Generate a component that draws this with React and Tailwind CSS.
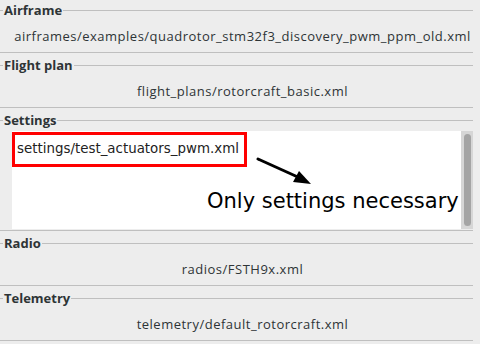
import React from 'react';

const FONT = { fontFamily: '"Open Sans", "DejaVu Sans", sans-serif' };

const FrameLabel = ({ title }) => (
  <div className="flex items-center h-[21px]">
    <div className="w-[3px] h-px bg-[#bfbfbf]" />
    <span className="px-[1px] text-[13px] font-bold text-[#2e3436] leading-none">{title}</span>
    <div className="w-[410px] flex-1 h-px bg-[#bfbfbf] mr-[7px]" />
  </div>
);

const FileFrame = ({ title, file }) => (
  <div className="mb-[2px]">
    <FrameLabel title={title} />
    <div className="h-[32px] flex items-center justify-center pl-[12px] text-[13px] tracking-[0.5px] text-[#2e3436] border-b border-[#bfbfbf] mr-[7px] whitespace-nowrap overflow-hidden">
      {file}
    </div>
  </div>
);

const Arrow = () => (
  <svg width="60" height="34" viewBox="0 0 60 34" className="absolute left-[243px] top-[25px]">
    <line x1="3" y1="3" x2="45" y2="22" stroke="#000" strokeWidth="3" strokeLinecap="round" />
    <polygon points="56,28 38,26 44,15" fill="#000" />
  </svg>
);

export default function App() {
  return (
    <div className="w-[480px] h-[344px] bg-[#ededed] overflow-hidden" style={FONT}>
      <FileFrame title="Airframe" file="airframes/examples/quadrotor_stm32f3_discovery_pwm_ppm_old.xml" />
      <FileFrame title="Flight plan" file="flight_plans/rotorcraft_basic.xml" />

      <div className="mb-[2px]">
        <FrameLabel title="Settings" />
        <div className="border-b border-[#bfbfbf] mr-[7px] pl-[12px] h-[100px] pb-px flex">
          <div className="relative flex-1 bg-white">
            <div
              className="absolute left-0 top-[1px] w-[235px] h-[35px] border-[3px] border-[#ff0000] flex items-center pl-[2px] text-[13.4px] text-[#222] whitespace-nowrap"
              style={{ fontFamily: '"DejaVu Sans", sans-serif' }}
            >
              settings/test_actuators_pwm.xml
            </div>
            <Arrow />
            <div
              className="absolute left-[195px] top-[55px] text-[21px] text-black whitespace-nowrap"
              style={{ fontFamily: '"DejaVu Sans", sans-serif' }}
            >
              Only settings necessary
            </div>
          </div>
          <div className="w-[12px] bg-[#d6d6d6] flex justify-center py-[3px]">
            <div className="w-[7px] h-full rounded-full bg-[#a4a4a4]" />
          </div>
        </div>
      </div>

      <FileFrame title="Radio" file="radios/FSTH9x.xml" />
      <FileFrame title="Telemetry" file="telemetry/default_rotorcraft.xml" />
    </div>
  );
}
